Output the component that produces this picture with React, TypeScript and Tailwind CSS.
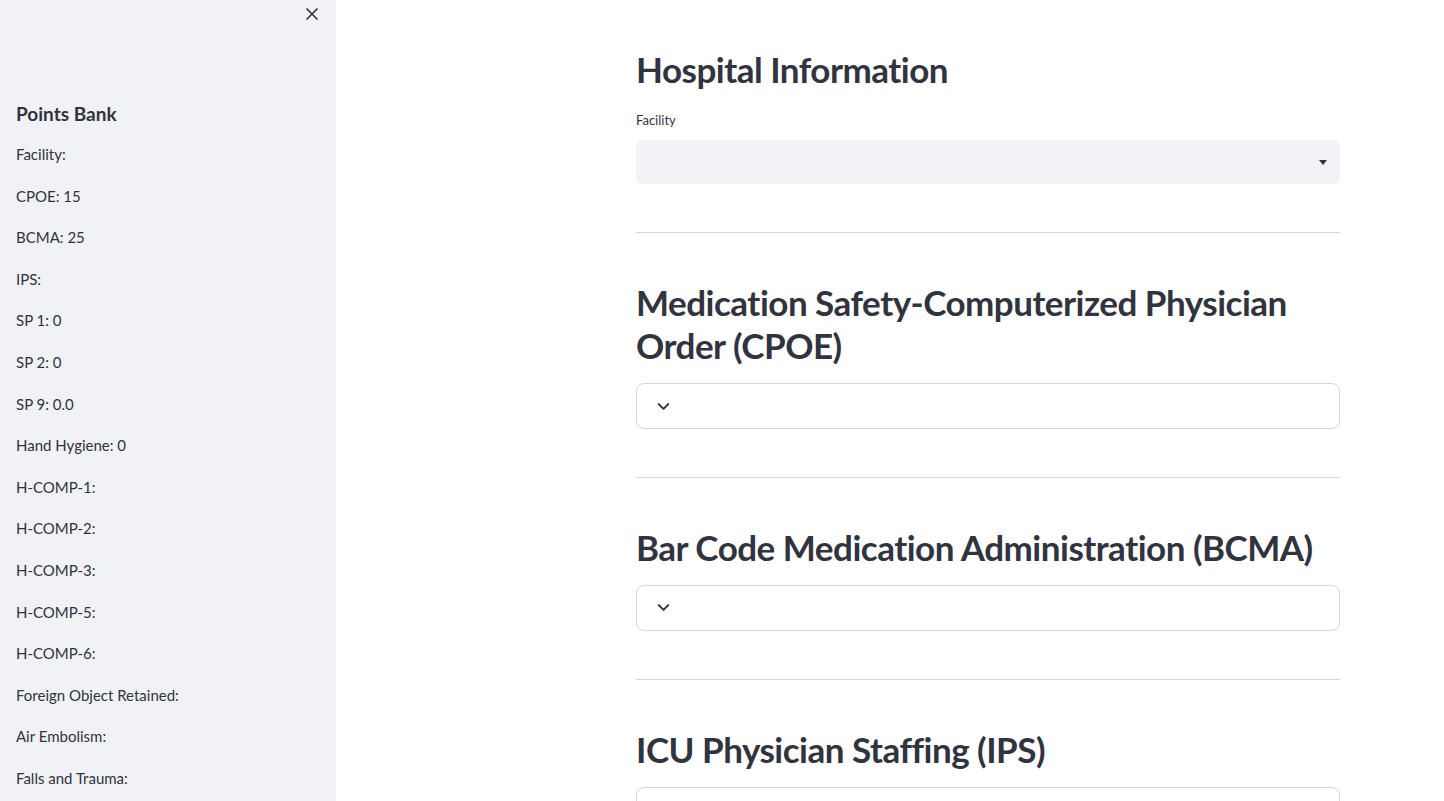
import React from "react";

const items = [
  "Facility:",
  "CPOE: 15",
  "BCMA: 25",
  "IPS:",
  "SP 1: 0",
  "SP 2: 0",
  "SP 9: 0.0",
  "Hand Hygiene: 0",
  "H-COMP-1:",
  "H-COMP-2:",
  "H-COMP-3:",
  "H-COMP-5:",
  "H-COMP-6:",
  "Foreign Object Retained:",
  "Air Embolism:",
  "Falls and Trauma:",
];

function Chevron() {
  return (
    <svg width="19" height="19" viewBox="0 0 24 24" fill="none" stroke="#31333F" strokeWidth="2.6" strokeLinecap="round" strokeLinejoin="round">
      <path d="M6 9l6 6 6-6" />
    </svg>
  );
}

function Expander() {
  return (
    <div className="h-[46px] border border-[#d6d6d9] rounded-lg flex items-center pl-[17px]">
      <Chevron />
    </div>
  );
}

function Heading({ children }: { children: React.ReactNode }) {
  return (
    <h2 className="text-[35px] leading-[43.2px] font-bold tracking-[-0.5px] text-[#31333F]">{children}</h2>
  );
}

export default function App() {
  return (
    <div
      className="flex w-[1444px] h-[801px] overflow-hidden bg-white text-[#31333F]"
      style={{ fontFamily: "Lato, 'Noto Sans', sans-serif" }}
    >
      <aside className="w-[336px] shrink-0 bg-[#F0F2F6] h-full relative">
        <button className="absolute left-[304px] top-[6px] w-[16px] h-[16px] flex items-center justify-center">
          <svg width="14" height="14" viewBox="0 0 14 14" fill="none" stroke="#31333F" strokeWidth="1.6">
            <path d="M1.5 1.5l11 11M12.5 1.5l-11 11" />
          </svg>
        </button>
        <div className="pt-[101px] pl-[16px]">
          <h3 className="text-[19px] leading-[26px] font-bold">Points Bank</h3>
          <div className="mt-[19px] flex flex-col gap-[25.6px]">
            {items.map((t) => (
              <p key={t} className="text-[15px] leading-[16px]">{t}</p>
            ))}
          </div>
        </div>
      </aside>
      <main className="flex-1">
        <div className="ml-[300px] w-[704px] pt-[48px] flex flex-col">
          <Heading>Hospital Information</Heading>
          <label className="mt-[19px] h-[20px] text-[13px] leading-[20px]">Facility</label>
          <div className="mt-[10px] h-[44px] bg-[#F0F2F6] rounded-md flex items-center justify-end pr-[13px]">
            <svg width="8" height="5" viewBox="0 0 8 5">
              <path d="M0 0h8L4 5z" fill="#31333F" />
            </svg>
          </div>
          <hr className="mt-[48px] border-0 border-t border-[#d6d6d9]" />
          <div className="mt-[48px]">
            <Heading>Medication Safety-Computerized Physician Order (CPOE)</Heading>
          </div>
          <div className="mt-[15.5px]"><Expander /></div>
          <hr className="mt-[48px] border-0 border-t border-[#d6d6d9]" />
          <div className="mt-[48px]">
            <Heading>Bar Code Medication Administration (BCMA)</Heading>
          </div>
          <div className="mt-[15.5px]"><Expander /></div>
          <hr className="mt-[48px] border-0 border-t border-[#d6d6d9]" />
          <div className="mt-[48px]">
            <Heading>ICU Physician Staffing (IPS)</Heading>
          </div>
          <div className="mt-[15.5px]"><Expander /></div>
        </div>
      </main>
    </div>
  );
}
